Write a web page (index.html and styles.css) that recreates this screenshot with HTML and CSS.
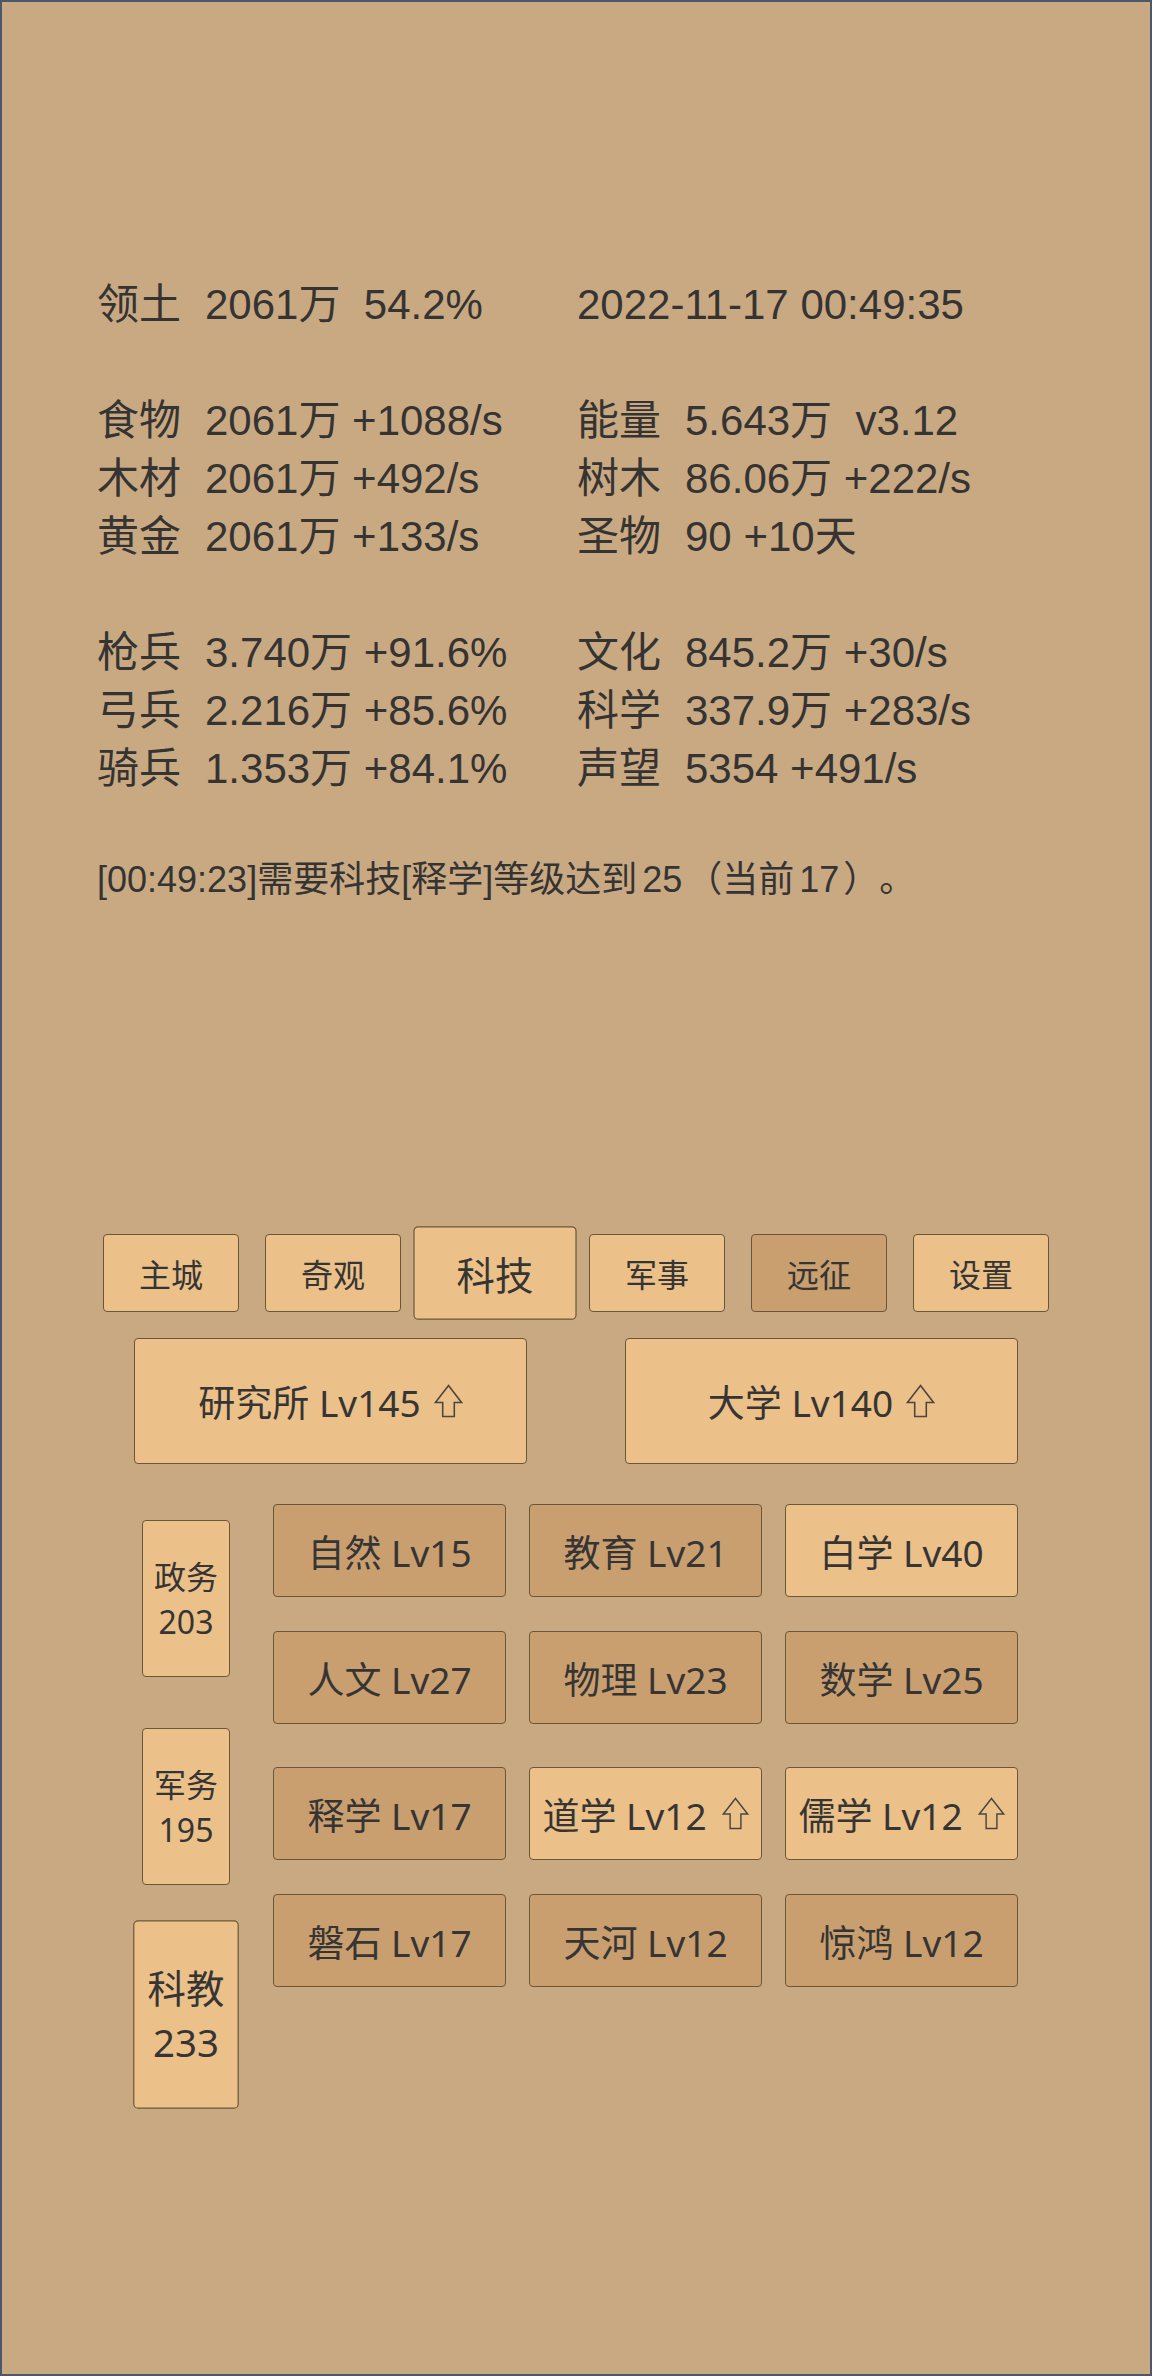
FILE: index.html
```html
<!DOCTYPE html>
<html lang="zh-CN">
<head>
<meta charset="utf-8">
<title>科技</title>
<link rel="stylesheet" href="styles.css">
</head>
<body>
<div class="frame">
  <section class="stats">
    <div class="row">
      <div class="cell"><span class="lbl">领土</span>2061万&nbsp;&nbsp;54.2%</div>
      <div class="cell">2022-11-17 00:49:35</div>
    </div>
    <div class="row blank"></div>
    <div class="row">
      <div class="cell"><span class="lbl">食物</span>2061万 +1088/s</div>
      <div class="cell"><span class="lbl">能量</span>5.643万&nbsp;&nbsp;v3.12</div>
    </div>
    <div class="row">
      <div class="cell"><span class="lbl">木材</span>2061万 +492/s</div>
      <div class="cell"><span class="lbl">树木</span>86.06万 +222/s</div>
    </div>
    <div class="row">
      <div class="cell"><span class="lbl">黄金</span>2061万 +133/s</div>
      <div class="cell"><span class="lbl">圣物</span>90 +10天</div>
    </div>
    <div class="row blank"></div>
    <div class="row">
      <div class="cell"><span class="lbl">枪兵</span>3.740万 +91.6%</div>
      <div class="cell"><span class="lbl">文化</span>845.2万 +30/s</div>
    </div>
    <div class="row">
      <div class="cell"><span class="lbl">弓兵</span>2.216万 +85.6%</div>
      <div class="cell"><span class="lbl">科学</span>337.9万 +283/s</div>
    </div>
    <div class="row">
      <div class="cell"><span class="lbl">骑兵</span>1.353万 +84.1%</div>
      <div class="cell"><span class="lbl">声望</span>5354 +491/s</div>
    </div>
  </section>

  <p class="msg">[00:49:23]需要科技[释学]等级达到<span class="num">25</span><span class="cjk">（当前</span><span class="num">17</span><span class="cjk">）。</span></p>

  <nav class="tabs">
    <div class="btn tab">主城</div>
    <div class="btn tab">奇观</div>
    <div class="btn tab selected">科技</div>
    <div class="btn tab">军事</div>
    <div class="btn tab dark">远征</div>
    <div class="btn tab">设置</div>
  </nav>

  <div class="buildings">
    <div class="btn big">研究所 Lv145<svg class="up" viewBox="0 0 30 35" width="29" height="34"><path d="M15 1.5 L28.5 19 L21 19 L21 33.5 L9 33.5 L9 19 L1.5 19 Z"/></svg></div>
    <div class="btn big">大学 Lv140<svg class="up" viewBox="0 0 30 35" width="29" height="34"><path d="M15 1.5 L28.5 19 L21 19 L21 33.5 L9 33.5 L9 19 L1.5 19 Z"/></svg></div>
  </div>

  <div class="tech">
    <div class="side">
      <div class="btn sidebtn">政务<br>203</div>
      <div class="btn sidebtn">军务<br>195</div>
      <div class="btn sidebtn selected">科教<br>233</div>
    </div>
    <div class="groups">
      <div class="grid">
        <div class="btn cell-btn dark">自然 Lv15</div>
        <div class="btn cell-btn dark">教育 Lv21</div>
        <div class="btn cell-btn">白学 Lv40</div>
        <div class="btn cell-btn dark">人文 Lv27</div>
        <div class="btn cell-btn dark">物理 Lv23</div>
        <div class="btn cell-btn dark">数学 Lv25</div>
      </div>
      <div class="grid">
        <div class="btn cell-btn dark">释学 Lv17</div>
        <div class="btn cell-btn">道学 Lv12<svg class="up" viewBox="0 0 30 35" width="27" height="33" preserveAspectRatio="none"><path d="M15 1.5 L28.5 18 L21 18 L21 33.5 L9 33.5 L9 18 L1.5 18 Z"/></svg></div>
        <div class="btn cell-btn">儒学 Lv12<svg class="up" viewBox="0 0 30 35" width="27" height="33" preserveAspectRatio="none"><path d="M15 1.5 L28.5 18 L21 18 L21 33.5 L9 33.5 L9 18 L1.5 18 Z"/></svg></div>
        <div class="btn cell-btn dark">磐石 Lv17</div>
        <div class="btn cell-btn dark">天河 Lv12</div>
        <div class="btn cell-btn dark">惊鸿 Lv12</div>
      </div>
    </div>
  </div>
</div>
</body>
</html>
```

FILE: styles.css
```css
* { box-sizing: border-box; }

html, body {
  margin: 0;
  padding: 0;
  background: #c9a982;
}

.frame {
  width: 1152px;
  height: 2376px;
  border: 2px solid #4b576b;
  background: #c9a982;
  color: #353433;
  overflow: hidden;
}

.stats {
  padding-top: 274px;
  padding-left: 95px;
  font-family: "Liberation Sans", "Noto Sans CJK SC", sans-serif;
  font-size: 42px;
  line-height: 58px;
}

.row {
  display: grid;
  grid-template-columns: 480px 1fr;
  height: 58px;
  white-space: nowrap;
}

.lbl {
  display: inline-block;
  width: 108px;
}

.msg {
  margin: 57px 0 0 0;
  padding-left: 95px;
  height: 50px;
  font-family: "Liberation Sans", "Noto Sans CJK SC", sans-serif;
  font-size: 36px;
  line-height: 50px;
  white-space: nowrap;
  text-spacing-trim: space-all;
}

.msg .cjk {
  font-family: "Noto Sans CJK SC", sans-serif;
  line-height: 1;
  text-spacing-trim: space-all;
}

.msg .num {
  margin: 0 4px 0 5px;
}

.btn {
  display: flex;
  align-items: center;
  justify-content: center;
  background: #ebc089;
  border: 1px solid #6c563a;
  border-radius: 4px;
  font-family: "Noto Sans", "Noto Sans CJK SC", sans-serif;
  color: #363534;
  white-space: nowrap;
}

.btn.dark {
  background: #c99f70;
}

.tabs {
  margin-top: 329px;
  display: flex;
  justify-content: center;
  align-items: center;
  height: 78px;
}

.tab {
  width: 136px;
  height: 78px;
  margin: 0 13px;
  font-size: 32px;
}

.selected {
  transform: scale(1.2);
}

.buildings {
  margin-top: 26px;
  display: flex;
  justify-content: center;
  gap: 98px;
}

.big {
  width: 393px;
  height: 126px;
  font-size: 37px;
}

.up {
  margin-left: 13px;
  fill: none;
  stroke: #4a4540;
  stroke-width: 1.6;
  stroke-linejoin: miter;
}

.tech {
  margin-top: 40px;
  padding-left: 140px;
  display: flex;
  align-items: flex-start;
}

.side {
  margin-top: 16px;
  width: 88px;
  display: flex;
  flex-direction: column;
  gap: 51px;
}

.sidebtn {
  width: 88px;
  height: 157px;
  font-size: 32px;
  line-height: 45px;
  text-align: center;
}

.groups {
  margin-left: 43px;
  display: flex;
  flex-direction: column;
  gap: 43px;
}

.grid {
  display: grid;
  grid-template-columns: repeat(3, 233px);
  column-gap: 23px;
  row-gap: 34px;
}

.cell-btn {
  height: 93px;
  font-size: 37px;
}

.cell-btn .up {
  margin-left: 15px;
}
```
